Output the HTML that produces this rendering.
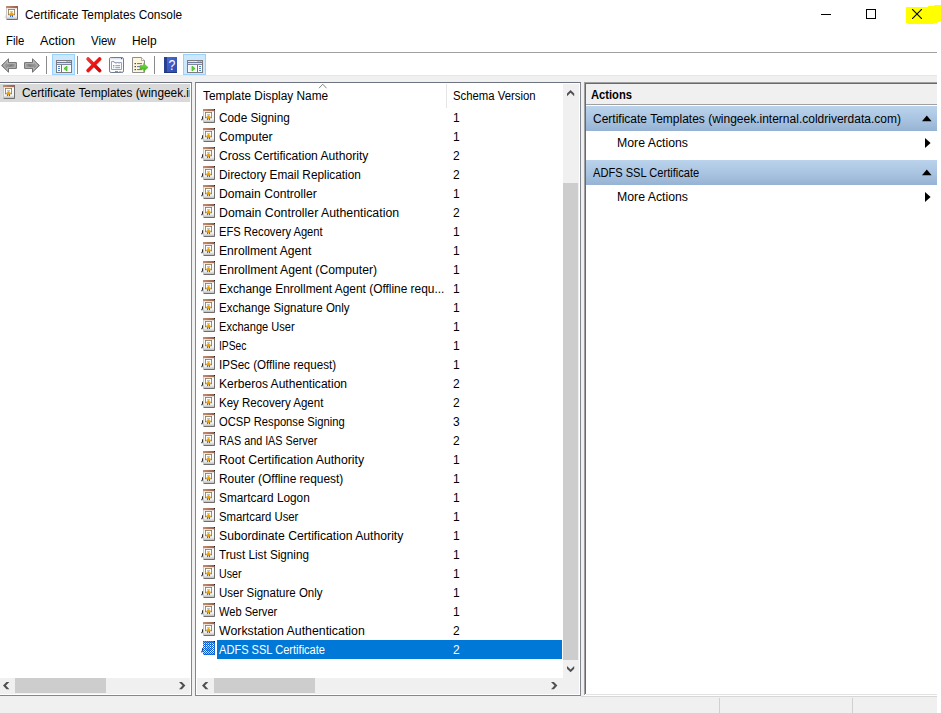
<!DOCTYPE html>
<html><head><meta charset="utf-8"><title>Certificate Templates Console</title>
<style>
html,body{margin:0;padding:0;background:#fff;}
body{width:941px;height:713px;position:relative;overflow:hidden;font-family:"Liberation Sans", sans-serif;font-size:12px;color:#000;}
.a{position:absolute;display:block}
.t{position:absolute;white-space:nowrap;line-height:14px;height:14px;transform-origin:0 0;font-size:12px}
.clip{position:absolute;overflow:hidden}
</style></head><body>
<svg width="0" height="0" style="position:absolute"><defs>
<linearGradient id="cg" x1="0" y1="0" x2="0" y2="1"><stop offset="0" stop-color="#fdfdfd"/><stop offset="0.74" stop-color="#f4f4f4"/><stop offset="0.88" stop-color="#d4d4d4"/><stop offset="1" stop-color="#b0b0b0"/></linearGradient>
<pattern id="dith" width="2" height="2" patternUnits="userSpaceOnUse"><rect x="0" y="0" width="1" height="1" fill="#0a5fd0"/><rect x="1" y="1" width="1" height="1" fill="#0a5fd0"/></pattern>
<linearGradient id="tb" x1="0" y1="0" x2="1" y2="0"><stop offset="0" stop-color="#c48d70"/><stop offset="1" stop-color="#94604c"/></linearGradient>
<linearGradient id="ag2" x1="0" y1="0" x2="1" y2="0.4"><stop offset="0" stop-color="#b4b4b4"/><stop offset="0.75" stop-color="#7c7c7c"/><stop offset="1" stop-color="#9a9a9a"/></linearGradient>
<linearGradient id="ag3" x1="1" y1="0" x2="0" y2="0.4"><stop offset="0" stop-color="#b4b4b4"/><stop offset="0.75" stop-color="#7c7c7c"/><stop offset="1" stop-color="#9a9a9a"/></linearGradient>
<linearGradient id="rx" gradientUnits="userSpaceOnUse" x1="2" y1="2" x2="16" y2="16"><stop offset="0" stop-color="#f43a3a"/><stop offset="0.5" stop-color="#ec1212"/><stop offset="1" stop-color="#c80000"/></linearGradient>
<linearGradient id="ag" x1="0" y1="0" x2="0" y2="1"><stop offset="0" stop-color="#c9c9c9"/><stop offset="0.5" stop-color="#8a8a8a"/><stop offset="1" stop-color="#b5b5b5"/></linearGradient>
<linearGradient id="hg" x1="0" y1="0" x2="1" y2="1"><stop offset="0" stop-color="#4a6fe0"/><stop offset="1" stop-color="#2d4aa8"/></linearGradient>
<linearGradient id="bh" x1="0" y1="0" x2="0" y2="1"><stop offset="0" stop-color="#bbd3ec"/><stop offset="0.5" stop-color="#aac5e2"/><stop offset="1" stop-color="#97b3d3"/></linearGradient>
<linearGradient id="gg" x1="0" y1="0" x2="0" y2="1"><stop offset="0" stop-color="#7ddc4a"/><stop offset="1" stop-color="#3fae1c"/></linearGradient>
</defs></svg>
<!-- title bar -->
<svg class="a" style="left:4px;top:6px" width="15" height="14" viewBox="0 0 15 14">
<path d="M2.2 7.3V12.2H0.3Z" fill="#e4e4e4"/>
<rect x="2.5" y="0.5" width="11.5" height="13" fill="url(#cg)" stroke="none"/>
<rect x="2" y="0" width="12" height="2.2" fill="url(#tb)"/>
<path d="M13.5 1.5V13.5H2.5" stroke="#6e6e6e" stroke-width="1" fill="none"/>
<path d="M2.5 2V13.5" stroke="#c8c8c8" stroke-width="1" fill="none"/>
<rect x="4.4" y="3.4" width="6.2" height="5.4" fill="#fff" stroke="#8f7246" stroke-width="0.8"/>
<rect x="6.1" y="9" width="1" height="2.1" fill="#2a62e0"/><rect x="8" y="9" width="1" height="2.1" fill="#2a62e0"/>
<rect x="6" y="5" width="3" height="0.7" fill="#8fb0f4"/>
<path d="M7.5 5.9L9.3 8L7.5 10.1L5.7 8Z" fill="#eaa400" stroke="#eaa400" stroke-width="0.7" stroke-linejoin="round"/>
</svg>
<span class="t" style="left:25px;top:8px;transform:scaleX(0.9872);">Certificate Templates Console</span>
<svg class="a" style="left:900px;top:0" width="41" height="30" viewBox="0 0 41 30"><path d="M6 7H28V6H34V5H41V21H40V22H37V23H34V24H8V23H6Z" fill="#ffff00"/></svg>
<div class="a" style="left:821px;top:14px;width:10px;height:1px;background:#000"></div>
<div class="a" style="left:866px;top:9px;width:8px;height:8px;border:1px solid #000"></div>
<svg class="a" style="left:912px;top:9px" width="10" height="10" viewBox="0 0 10 10"><path d="M0 0L10 10M10 0L0 10" stroke="#000" stroke-width="1.1"/></svg>
<!-- menu -->
<span class="t" style="left:6px;top:34px;transform:scaleX(0.9440);">File</span><span class="t" style="left:40px;top:34px;transform:scaleX(1.0483);">Action</span><span class="t" style="left:91px;top:34px;transform:scaleX(0.9553);">View</span><span class="t" style="left:132px;top:34px;transform:scaleX(0.9948);">Help</span>
<!-- toolbar -->
<div class="a" style="left:0;top:52px;width:937px;height:1px;background:#a0a0a0"></div>

<svg class="a" style="left:1px;top:58px" width="16" height="15" viewBox="0 0 16 15"><path d="M0.6 7.5L7.5 0.8V4.6H15.4V10.4H7.5V14.2Z" fill="url(#ag)" stroke="#707070" stroke-width="1" stroke-linejoin="round"/><path d="M2.3 7.5L6.4 3.5V5.7H14.3V9.3H6.4V11.5Z" fill="url(#ag2)" stroke="#c4c4c4" stroke-width="0.7" stroke-linejoin="round"/></svg>
<svg class="a" style="left:24px;top:58px" width="16" height="15" viewBox="0 0 16 15"><path d="M15.4 7.5L8.5 0.8V4.6H0.6V10.4H8.5V14.2Z" fill="url(#ag)" stroke="#707070" stroke-width="1" stroke-linejoin="round"/><path d="M13.7 7.5L9.6 3.5V5.7H1.7V9.3H9.6V11.5Z" fill="url(#ag3)" stroke="#c4c4c4" stroke-width="0.7" stroke-linejoin="round"/></svg>
<div class="a" style="left:46px;top:56px;width:1px;height:18px;background:#8a8a8a"></div>
<div class="a" style="left:52px;top:54px;width:21px;height:19px;background:#cce8ff;border:1px solid #99d1ff"></div>
<svg class="a" style="left:56px;top:60px" width="16" height="13" viewBox="0 0 16 13">
<rect x="0.5" y="0.5" width="15" height="12" fill="#7f88a0" stroke="#7c7c80"/>
<rect x="1" y="1" width="9.6" height="1" fill="#e6eaf3"/><rect x="11.6" y="1" width="1" height="1" fill="#f4f6fb"/><rect x="13.6" y="1" width="1" height="1" fill="#f4f6fb"/>
<rect x="1" y="2" width="14" height="1" fill="#707b97"/>
<rect x="1" y="3" width="14" height="1" fill="#dde1ec"/>
<rect x="1" y="4" width="14" height="1" fill="#7f88a0"/>
<rect x="1" y="5" width="4" height="7" fill="#fff"/><rect x="6" y="5" width="9" height="7" fill="#fff"/><rect x="7" y="5.6" width="6.6" height="5.6" fill="#f1f1f1"/>
<rect x="5" y="5" width="1" height="7" fill="#66708a"/>
<rect x="1.9" y="6.1" width="2.2" height="0.9" rx="0.4" fill="#3b78c8"/><rect x="1.9" y="8.1" width="2.2" height="0.9" rx="0.4" fill="#3b78c8"/><rect x="1.9" y="10.1" width="2.2" height="0.9" rx="0.4" fill="#3b78c8"/>
<path d="M10.9 6.2V10.9L8 8.55Z" fill="#62cc3e" stroke="#3cb521" stroke-width="0.8" stroke-linejoin="round"/></svg>
<div class="a" style="left:77px;top:56px;width:1px;height:18px;background:#8a8a8a"></div>
<svg class="a" style="left:85px;top:56px" width="18" height="18" viewBox="0 0 18 18"><path d="M3 2.8L14.5 14.4M14.5 2.8L3 14.4" stroke="#9c0000" stroke-width="3.6" stroke-linecap="round" opacity="0.5" transform="translate(0.35,0.4)"/><path d="M3 2.8L14.5 14.4M14.5 2.8L3 14.4" stroke="url(#rx)" stroke-width="3.3" stroke-linecap="round"/></svg>
<svg class="a" style="left:109px;top:57px" width="15" height="16" viewBox="0 0 15 16"><rect x="0.5" y="0.5" width="14" height="15" rx="1.6" fill="#fbfbfd" stroke="#747b8c"/><rect x="1" y="1" width="13" height="1.4" fill="#dfe3ee"/><rect x="12" y="1" width="1.2" height="1.2" fill="#3a5a9a"/>
<path d="M2.5 4.5H5V5.5H12.5V12.5H2.5Z" fill="#fff" stroke="#9aa1b6" stroke-width="1"/><rect x="6" y="5.8" width="2.2" height="1" fill="#c9cede"/><rect x="9" y="5.8" width="2.2" height="1" fill="#c9cede"/>
<rect x="4" y="8" width="1.4" height="1.4" fill="#1eb4ff"/><rect x="6.3" y="8.2" width="4.8" height="1" fill="#8c92a6"/>
<rect x="4.2" y="10.2" width="1" height="1" fill="#8c92a6"/><rect x="6.3" y="10.2" width="4.8" height="1" fill="#8c92a6"/>
<rect x="6" y="14" width="3" height="1.2" fill="#1eb4ff"/><rect x="10" y="14" width="2.6" height="1.2" fill="#b5b9c6"/></svg>
<svg class="a" style="left:132px;top:57px" width="17" height="16" viewBox="0 0 17 16"><path d="M0.5 0.5H9.5L12.5 3.5V15.5H0.5Z" fill="#fdf8dc" stroke="#8e8e8e"/><path d="M9.5 0.5V3.5H12.5" fill="#fff" stroke="#9a9a9a" stroke-width="0.8"/>
<rect x="2.6" y="6" width="1.2" height="1.2" fill="#222"/><rect x="2.6" y="9" width="1.2" height="1.2" fill="#222"/><rect x="2.6" y="12" width="1.2" height="1.2" fill="#222"/>
<rect x="5" y="6.1" width="5" height="1" fill="#6a62b8"/><rect x="5" y="9.1" width="3" height="1" fill="#6a62b8"/><rect x="5" y="12.1" width="5" height="1" fill="#6a62b8"/>
<path d="M8 8.6H11.6V6.4L16 10.4L11.6 14.4V12.2H8Z" fill="url(#gg)" stroke="#4cb82a" stroke-width="0.6"/></svg>
<div class="a" style="left:154px;top:56px;width:1px;height:18px;background:#8a8a8a"></div>
<svg class="a" style="left:164px;top:57px" width="13" height="16" viewBox="0 0 13 16"><rect x="0" y="0" width="13" height="16" fill="url(#hg)"/><rect x="0" y="0" width="3" height="16" fill="#27408f"/><rect x="0" y="15" width="13" height="1" fill="#22367c"/>
<text x="0" y="13.5" transform="translate(8 0) scale(0.82 1)" font-family="Liberation Sans, sans-serif" font-size="15" font-weight="400" fill="#fff" text-anchor="middle">?</text></svg>
<div class="a" style="left:183px;top:54px;width:21px;height:19px;background:#cce8ff;border:1px solid #99d1ff"></div>
<svg class="a" style="left:187px;top:60px" width="16" height="13" viewBox="0 0 16 13">
<rect x="0.5" y="0.5" width="15" height="12" fill="#7f88a0" stroke="#7c7c80"/>
<rect x="1" y="1" width="9.6" height="1" fill="#e6eaf3"/><rect x="11.6" y="1" width="1" height="1" fill="#f4f6fb"/><rect x="13.6" y="1" width="1" height="1" fill="#f4f6fb"/>
<rect x="1" y="2" width="14" height="1" fill="#707b97"/>
<rect x="1" y="3" width="14" height="1" fill="#dde1ec"/>
<rect x="1" y="4" width="14" height="1" fill="#7f88a0"/>
<g transform="translate(16,0) scale(-1,1)"><rect x="1" y="5" width="4" height="7" fill="#fff"/><rect x="6" y="5" width="9" height="7" fill="#fff"/><rect x="7" y="5.6" width="6.6" height="5.6" fill="#f1f1f1"/>
<rect x="5" y="5" width="1" height="7" fill="#66708a"/>
<rect x="1.9" y="6.1" width="2.2" height="0.9" rx="0.4" fill="#3b78c8"/><rect x="1.9" y="8.1" width="2.2" height="0.9" rx="0.4" fill="#3b78c8"/><rect x="1.9" y="10.1" width="2.2" height="0.9" rx="0.4" fill="#3b78c8"/>
<path d="M10.9 6.2V10.9L8 8.55Z" fill="#62cc3e" stroke="#3cb521" stroke-width="0.8" stroke-linejoin="round"/></g></svg>

<div class="a" style="left:0;top:75px;width:937px;height:7px;background:#f0f0f0"></div><div class="a" style="left:0;top:75px;width:937px;height:1px;background:#e7e7e7"></div>
<!-- main gray bg (gaps between panes + status) -->
<div class="a" style="left:0;top:82px;width:937px;height:631px;background:#f0f0f0"></div>
<!-- tree pane -->
<div class="a" style="left:0;top:82px;width:191px;height:613px;background:#fff;border-top:1px solid #6d7380;border-right:1px solid #828790;border-bottom:1px solid #828790;box-sizing:content-box;width:191px;height:612px"></div>
<div class="a" style="left:0;top:84px;width:190px;height:18px;background:#d9d9d9"></div>
<svg class="a" style="left:1px;top:85px" width="15" height="14" viewBox="0 0 15 14">
<path d="M2.2 7.3V12.2H0.3Z" fill="#e4e4e4"/>
<rect x="2.5" y="0.5" width="11.5" height="13" fill="url(#cg)" stroke="none"/>
<rect x="2" y="0" width="12" height="2.2" fill="url(#tb)"/>
<path d="M13.5 1.5V13.5H2.5" stroke="#6e6e6e" stroke-width="1" fill="none"/>
<path d="M2.5 2V13.5" stroke="#c8c8c8" stroke-width="1" fill="none"/>
<rect x="4.4" y="3.4" width="6.2" height="5.4" fill="#fff" stroke="#8f7246" stroke-width="0.8"/>
<rect x="6.1" y="9" width="1" height="2.1" fill="#2a62e0"/><rect x="8" y="9" width="1" height="2.1" fill="#2a62e0"/>
<rect x="6" y="5" width="3" height="0.7" fill="#8fb0f4"/>
<path d="M7.5 5.9L9.3 8L7.5 10.1L5.7 8Z" fill="#eaa400" stroke="#eaa400" stroke-width="0.7" stroke-linejoin="round"/>
</svg>
<div class="clip" style="left:0;top:84px;width:189.6px;height:18px"><div style="position:absolute;left:0;top:-84px"><span class="t" style="left:22px;top:86px;transform:scaleX(0.9871)">Certificate Templates (wingeek.internal.coldriverdata.com)</span></div></div>
<div class="a" style="left:0;top:678px;width:190px;height:16px;background:#f0f0f0"></div>
<div class="a" style="left:15px;top:678px;width:91px;height:15px;background:#cdcdcd"></div>
<svg class="a" style="left:2.9px;top:681.9px" width="7" height="8" viewBox="0 0 7 8"><path d="M6.4 0H3.5L0 3.6L3.5 7.2H6.4L2.9 3.6Z" fill="#505050"/></svg><svg class="a" style="left:178.8px;top:681.9px" width="7" height="8" viewBox="0 0 7 8"><path d="M0 0H2.9L6.4 3.6L2.9 7.2H0L3.5 3.6Z" fill="#505050"/></svg>
<!-- list pane -->
<div class="a" style="left:195px;top:82px;width:384px;height:612px;background:#fff;border:1px solid #828790;border-top-color:#6d7380"></div>
<div class="a" style="left:446px;top:84px;width:1px;height:24px;background:#e5e5e5"></div>
<svg class="a" style="left:318px;top:83px" width="10" height="6" viewBox="0 0 10 6"><path d="M1 5.2L4.75 1.2L8.5 5.2" fill="none" stroke="#777" stroke-width="0.9"/></svg>
<span class="t" style="left:203px;top:89px;transform:scaleX(0.9871);">Template Display Name</span><span class="t" style="left:453px;top:89px;transform:scaleX(0.9455);">Schema Version</span>
<svg class="a" style="left:201px;top:109px" width="15" height="14" viewBox="0 0 15 14">
<path d="M1.6 7.2v2.2L0.6 11.3" stroke="#222" stroke-width="1.1" fill="none"/>
<rect x="2.5" y="0.5" width="11.5" height="13" fill="url(#cg)" stroke="none"/>
<rect x="2" y="0" width="12" height="2.2" fill="url(#tb)"/><rect x="13" y="0" width="1" height="1" fill="#1a1a1a"/>
<path d="M13.5 1.5V13.5H2.5" stroke="#6e6e6e" stroke-width="1" fill="none"/>
<path d="M2.5 2V13.5" stroke="#c8c8c8" stroke-width="1" fill="none"/>
<rect x="4.4" y="3.4" width="6.2" height="5.4" fill="#fff" stroke="#8f7246" stroke-width="0.8"/>
<rect x="6.1" y="9" width="1" height="2.1" fill="#2a62e0"/><rect x="8" y="9" width="1" height="2.1" fill="#2a62e0"/>
<rect x="6" y="5" width="3" height="0.7" fill="#8fb0f4"/>
<path d="M7.5 5.9L9.3 8L7.5 10.1L5.7 8Z" fill="#eaa400" stroke="#eaa400" stroke-width="0.7" stroke-linejoin="round"/>
</svg><span class="t" style="left:219px;top:111px;transform:scaleX(0.9825);">Code Signing</span><span class="t" style="left:453px;top:111px;">1</span><svg class="a" style="left:201px;top:128px" width="15" height="14" viewBox="0 0 15 14">
<path d="M1.6 7.2v2.2L0.6 11.3" stroke="#222" stroke-width="1.1" fill="none"/>
<rect x="2.5" y="0.5" width="11.5" height="13" fill="url(#cg)" stroke="none"/>
<rect x="2" y="0" width="12" height="2.2" fill="url(#tb)"/><rect x="13" y="0" width="1" height="1" fill="#1a1a1a"/>
<path d="M13.5 1.5V13.5H2.5" stroke="#6e6e6e" stroke-width="1" fill="none"/>
<path d="M2.5 2V13.5" stroke="#c8c8c8" stroke-width="1" fill="none"/>
<rect x="4.4" y="3.4" width="6.2" height="5.4" fill="#fff" stroke="#8f7246" stroke-width="0.8"/>
<rect x="6.1" y="9" width="1" height="2.1" fill="#2a62e0"/><rect x="8" y="9" width="1" height="2.1" fill="#2a62e0"/>
<rect x="6" y="5" width="3" height="0.7" fill="#8fb0f4"/>
<path d="M7.5 5.9L9.3 8L7.5 10.1L5.7 8Z" fill="#eaa400" stroke="#eaa400" stroke-width="0.7" stroke-linejoin="round"/>
</svg><span class="t" style="left:219px;top:130px;transform:scaleX(1.0190);">Computer</span><span class="t" style="left:453px;top:130px;">1</span><svg class="a" style="left:201px;top:147px" width="15" height="14" viewBox="0 0 15 14">
<path d="M1.6 7.2v2.2L0.6 11.3" stroke="#222" stroke-width="1.1" fill="none"/>
<rect x="2.5" y="0.5" width="11.5" height="13" fill="url(#cg)" stroke="none"/>
<rect x="2" y="0" width="12" height="2.2" fill="url(#tb)"/><rect x="13" y="0" width="1" height="1" fill="#1a1a1a"/>
<path d="M13.5 1.5V13.5H2.5" stroke="#6e6e6e" stroke-width="1" fill="none"/>
<path d="M2.5 2V13.5" stroke="#c8c8c8" stroke-width="1" fill="none"/>
<rect x="4.4" y="3.4" width="6.2" height="5.4" fill="#fff" stroke="#8f7246" stroke-width="0.8"/>
<rect x="6.1" y="9" width="1" height="2.1" fill="#2a62e0"/><rect x="8" y="9" width="1" height="2.1" fill="#2a62e0"/>
<rect x="6" y="5" width="3" height="0.7" fill="#8fb0f4"/>
<path d="M7.5 5.9L9.3 8L7.5 10.1L5.7 8Z" fill="#eaa400" stroke="#eaa400" stroke-width="0.7" stroke-linejoin="round"/>
</svg><span class="t" style="left:219px;top:149px;transform:scaleX(1.0084);">Cross Certification Authority</span><span class="t" style="left:453px;top:149px;">2</span><svg class="a" style="left:201px;top:166px" width="15" height="14" viewBox="0 0 15 14">
<path d="M1.6 7.2v2.2L0.6 11.3" stroke="#222" stroke-width="1.1" fill="none"/>
<rect x="2.5" y="0.5" width="11.5" height="13" fill="url(#cg)" stroke="none"/>
<rect x="2" y="0" width="12" height="2.2" fill="url(#tb)"/><rect x="13" y="0" width="1" height="1" fill="#1a1a1a"/>
<path d="M13.5 1.5V13.5H2.5" stroke="#6e6e6e" stroke-width="1" fill="none"/>
<path d="M2.5 2V13.5" stroke="#c8c8c8" stroke-width="1" fill="none"/>
<rect x="4.4" y="3.4" width="6.2" height="5.4" fill="#fff" stroke="#8f7246" stroke-width="0.8"/>
<rect x="6.1" y="9" width="1" height="2.1" fill="#2a62e0"/><rect x="8" y="9" width="1" height="2.1" fill="#2a62e0"/>
<rect x="6" y="5" width="3" height="0.7" fill="#8fb0f4"/>
<path d="M7.5 5.9L9.3 8L7.5 10.1L5.7 8Z" fill="#eaa400" stroke="#eaa400" stroke-width="0.7" stroke-linejoin="round"/>
</svg><span class="t" style="left:219px;top:168px;transform:scaleX(0.9843);">Directory Email Replication</span><span class="t" style="left:453px;top:168px;">2</span><svg class="a" style="left:201px;top:185px" width="15" height="14" viewBox="0 0 15 14">
<path d="M1.6 7.2v2.2L0.6 11.3" stroke="#222" stroke-width="1.1" fill="none"/>
<rect x="2.5" y="0.5" width="11.5" height="13" fill="url(#cg)" stroke="none"/>
<rect x="2" y="0" width="12" height="2.2" fill="url(#tb)"/><rect x="13" y="0" width="1" height="1" fill="#1a1a1a"/>
<path d="M13.5 1.5V13.5H2.5" stroke="#6e6e6e" stroke-width="1" fill="none"/>
<path d="M2.5 2V13.5" stroke="#c8c8c8" stroke-width="1" fill="none"/>
<rect x="4.4" y="3.4" width="6.2" height="5.4" fill="#fff" stroke="#8f7246" stroke-width="0.8"/>
<rect x="6.1" y="9" width="1" height="2.1" fill="#2a62e0"/><rect x="8" y="9" width="1" height="2.1" fill="#2a62e0"/>
<rect x="6" y="5" width="3" height="0.7" fill="#8fb0f4"/>
<path d="M7.5 5.9L9.3 8L7.5 10.1L5.7 8Z" fill="#eaa400" stroke="#eaa400" stroke-width="0.7" stroke-linejoin="round"/>
</svg><span class="t" style="left:219px;top:187px;transform:scaleX(1.0104);">Domain Controller</span><span class="t" style="left:453px;top:187px;">1</span><svg class="a" style="left:201px;top:204px" width="15" height="14" viewBox="0 0 15 14">
<path d="M1.6 7.2v2.2L0.6 11.3" stroke="#222" stroke-width="1.1" fill="none"/>
<rect x="2.5" y="0.5" width="11.5" height="13" fill="url(#cg)" stroke="none"/>
<rect x="2" y="0" width="12" height="2.2" fill="url(#tb)"/><rect x="13" y="0" width="1" height="1" fill="#1a1a1a"/>
<path d="M13.5 1.5V13.5H2.5" stroke="#6e6e6e" stroke-width="1" fill="none"/>
<path d="M2.5 2V13.5" stroke="#c8c8c8" stroke-width="1" fill="none"/>
<rect x="4.4" y="3.4" width="6.2" height="5.4" fill="#fff" stroke="#8f7246" stroke-width="0.8"/>
<rect x="6.1" y="9" width="1" height="2.1" fill="#2a62e0"/><rect x="8" y="9" width="1" height="2.1" fill="#2a62e0"/>
<rect x="6" y="5" width="3" height="0.7" fill="#8fb0f4"/>
<path d="M7.5 5.9L9.3 8L7.5 10.1L5.7 8Z" fill="#eaa400" stroke="#eaa400" stroke-width="0.7" stroke-linejoin="round"/>
</svg><span class="t" style="left:219px;top:206px;transform:scaleX(1.0265);">Domain Controller Authentication</span><span class="t" style="left:453px;top:206px;">2</span><svg class="a" style="left:201px;top:223px" width="15" height="14" viewBox="0 0 15 14">
<path d="M1.6 7.2v2.2L0.6 11.3" stroke="#222" stroke-width="1.1" fill="none"/>
<rect x="2.5" y="0.5" width="11.5" height="13" fill="url(#cg)" stroke="none"/>
<rect x="2" y="0" width="12" height="2.2" fill="url(#tb)"/><rect x="13" y="0" width="1" height="1" fill="#1a1a1a"/>
<path d="M13.5 1.5V13.5H2.5" stroke="#6e6e6e" stroke-width="1" fill="none"/>
<path d="M2.5 2V13.5" stroke="#c8c8c8" stroke-width="1" fill="none"/>
<rect x="4.4" y="3.4" width="6.2" height="5.4" fill="#fff" stroke="#8f7246" stroke-width="0.8"/>
<rect x="6.1" y="9" width="1" height="2.1" fill="#2a62e0"/><rect x="8" y="9" width="1" height="2.1" fill="#2a62e0"/>
<rect x="6" y="5" width="3" height="0.7" fill="#8fb0f4"/>
<path d="M7.5 5.9L9.3 8L7.5 10.1L5.7 8Z" fill="#eaa400" stroke="#eaa400" stroke-width="0.7" stroke-linejoin="round"/>
</svg><span class="t" style="left:219px;top:225px;transform:scaleX(0.9303);">EFS Recovery Agent</span><span class="t" style="left:453px;top:225px;">1</span><svg class="a" style="left:201px;top:242px" width="15" height="14" viewBox="0 0 15 14">
<path d="M1.6 7.2v2.2L0.6 11.3" stroke="#222" stroke-width="1.1" fill="none"/>
<rect x="2.5" y="0.5" width="11.5" height="13" fill="url(#cg)" stroke="none"/>
<rect x="2" y="0" width="12" height="2.2" fill="url(#tb)"/><rect x="13" y="0" width="1" height="1" fill="#1a1a1a"/>
<path d="M13.5 1.5V13.5H2.5" stroke="#6e6e6e" stroke-width="1" fill="none"/>
<path d="M2.5 2V13.5" stroke="#c8c8c8" stroke-width="1" fill="none"/>
<rect x="4.4" y="3.4" width="6.2" height="5.4" fill="#fff" stroke="#8f7246" stroke-width="0.8"/>
<rect x="6.1" y="9" width="1" height="2.1" fill="#2a62e0"/><rect x="8" y="9" width="1" height="2.1" fill="#2a62e0"/>
<rect x="6" y="5" width="3" height="0.7" fill="#8fb0f4"/>
<path d="M7.5 5.9L9.3 8L7.5 10.1L5.7 8Z" fill="#eaa400" stroke="#eaa400" stroke-width="0.7" stroke-linejoin="round"/>
</svg><span class="t" style="left:219px;top:244px;transform:scaleX(1.0110);">Enrollment Agent</span><span class="t" style="left:453px;top:244px;">1</span><svg class="a" style="left:201px;top:261px" width="15" height="14" viewBox="0 0 15 14">
<path d="M1.6 7.2v2.2L0.6 11.3" stroke="#222" stroke-width="1.1" fill="none"/>
<rect x="2.5" y="0.5" width="11.5" height="13" fill="url(#cg)" stroke="none"/>
<rect x="2" y="0" width="12" height="2.2" fill="url(#tb)"/><rect x="13" y="0" width="1" height="1" fill="#1a1a1a"/>
<path d="M13.5 1.5V13.5H2.5" stroke="#6e6e6e" stroke-width="1" fill="none"/>
<path d="M2.5 2V13.5" stroke="#c8c8c8" stroke-width="1" fill="none"/>
<rect x="4.4" y="3.4" width="6.2" height="5.4" fill="#fff" stroke="#8f7246" stroke-width="0.8"/>
<rect x="6.1" y="9" width="1" height="2.1" fill="#2a62e0"/><rect x="8" y="9" width="1" height="2.1" fill="#2a62e0"/>
<rect x="6" y="5" width="3" height="0.7" fill="#8fb0f4"/>
<path d="M7.5 5.9L9.3 8L7.5 10.1L5.7 8Z" fill="#eaa400" stroke="#eaa400" stroke-width="0.7" stroke-linejoin="round"/>
</svg><span class="t" style="left:219px;top:263px;transform:scaleX(1.0170);">Enrollment Agent (Computer)</span><span class="t" style="left:453px;top:263px;">1</span><svg class="a" style="left:201px;top:280px" width="15" height="14" viewBox="0 0 15 14">
<path d="M1.6 7.2v2.2L0.6 11.3" stroke="#222" stroke-width="1.1" fill="none"/>
<rect x="2.5" y="0.5" width="11.5" height="13" fill="url(#cg)" stroke="none"/>
<rect x="2" y="0" width="12" height="2.2" fill="url(#tb)"/><rect x="13" y="0" width="1" height="1" fill="#1a1a1a"/>
<path d="M13.5 1.5V13.5H2.5" stroke="#6e6e6e" stroke-width="1" fill="none"/>
<path d="M2.5 2V13.5" stroke="#c8c8c8" stroke-width="1" fill="none"/>
<rect x="4.4" y="3.4" width="6.2" height="5.4" fill="#fff" stroke="#8f7246" stroke-width="0.8"/>
<rect x="6.1" y="9" width="1" height="2.1" fill="#2a62e0"/><rect x="8" y="9" width="1" height="2.1" fill="#2a62e0"/>
<rect x="6" y="5" width="3" height="0.7" fill="#8fb0f4"/>
<path d="M7.5 5.9L9.3 8L7.5 10.1L5.7 8Z" fill="#eaa400" stroke="#eaa400" stroke-width="0.7" stroke-linejoin="round"/>
</svg><span class="t" style="left:219px;top:282px;transform:scaleX(0.9917);">Exchange Enrollment Agent (Offline requ...</span><span class="t" style="left:453px;top:282px;">1</span><svg class="a" style="left:201px;top:299px" width="15" height="14" viewBox="0 0 15 14">
<path d="M1.6 7.2v2.2L0.6 11.3" stroke="#222" stroke-width="1.1" fill="none"/>
<rect x="2.5" y="0.5" width="11.5" height="13" fill="url(#cg)" stroke="none"/>
<rect x="2" y="0" width="12" height="2.2" fill="url(#tb)"/><rect x="13" y="0" width="1" height="1" fill="#1a1a1a"/>
<path d="M13.5 1.5V13.5H2.5" stroke="#6e6e6e" stroke-width="1" fill="none"/>
<path d="M2.5 2V13.5" stroke="#c8c8c8" stroke-width="1" fill="none"/>
<rect x="4.4" y="3.4" width="6.2" height="5.4" fill="#fff" stroke="#8f7246" stroke-width="0.8"/>
<rect x="6.1" y="9" width="1" height="2.1" fill="#2a62e0"/><rect x="8" y="9" width="1" height="2.1" fill="#2a62e0"/>
<rect x="6" y="5" width="3" height="0.7" fill="#8fb0f4"/>
<path d="M7.5 5.9L9.3 8L7.5 10.1L5.7 8Z" fill="#eaa400" stroke="#eaa400" stroke-width="0.7" stroke-linejoin="round"/>
</svg><span class="t" style="left:219px;top:301px;transform:scaleX(0.9596);">Exchange Signature Only</span><span class="t" style="left:453px;top:301px;">1</span><svg class="a" style="left:201px;top:318px" width="15" height="14" viewBox="0 0 15 14">
<path d="M1.6 7.2v2.2L0.6 11.3" stroke="#222" stroke-width="1.1" fill="none"/>
<rect x="2.5" y="0.5" width="11.5" height="13" fill="url(#cg)" stroke="none"/>
<rect x="2" y="0" width="12" height="2.2" fill="url(#tb)"/><rect x="13" y="0" width="1" height="1" fill="#1a1a1a"/>
<path d="M13.5 1.5V13.5H2.5" stroke="#6e6e6e" stroke-width="1" fill="none"/>
<path d="M2.5 2V13.5" stroke="#c8c8c8" stroke-width="1" fill="none"/>
<rect x="4.4" y="3.4" width="6.2" height="5.4" fill="#fff" stroke="#8f7246" stroke-width="0.8"/>
<rect x="6.1" y="9" width="1" height="2.1" fill="#2a62e0"/><rect x="8" y="9" width="1" height="2.1" fill="#2a62e0"/>
<rect x="6" y="5" width="3" height="0.7" fill="#8fb0f4"/>
<path d="M7.5 5.9L9.3 8L7.5 10.1L5.7 8Z" fill="#eaa400" stroke="#eaa400" stroke-width="0.7" stroke-linejoin="round"/>
</svg><span class="t" style="left:219px;top:320px;transform:scaleX(0.9221);">Exchange User</span><span class="t" style="left:453px;top:320px;">1</span><svg class="a" style="left:201px;top:337px" width="15" height="14" viewBox="0 0 15 14">
<path d="M1.6 7.2v2.2L0.6 11.3" stroke="#222" stroke-width="1.1" fill="none"/>
<rect x="2.5" y="0.5" width="11.5" height="13" fill="url(#cg)" stroke="none"/>
<rect x="2" y="0" width="12" height="2.2" fill="url(#tb)"/><rect x="13" y="0" width="1" height="1" fill="#1a1a1a"/>
<path d="M13.5 1.5V13.5H2.5" stroke="#6e6e6e" stroke-width="1" fill="none"/>
<path d="M2.5 2V13.5" stroke="#c8c8c8" stroke-width="1" fill="none"/>
<rect x="4.4" y="3.4" width="6.2" height="5.4" fill="#fff" stroke="#8f7246" stroke-width="0.8"/>
<rect x="6.1" y="9" width="1" height="2.1" fill="#2a62e0"/><rect x="8" y="9" width="1" height="2.1" fill="#2a62e0"/>
<rect x="6" y="5" width="3" height="0.7" fill="#8fb0f4"/>
<path d="M7.5 5.9L9.3 8L7.5 10.1L5.7 8Z" fill="#eaa400" stroke="#eaa400" stroke-width="0.7" stroke-linejoin="round"/>
</svg><span class="t" style="left:219px;top:339px;transform:scaleX(0.8583);">IPSec</span><span class="t" style="left:453px;top:339px;">1</span><svg class="a" style="left:201px;top:356px" width="15" height="14" viewBox="0 0 15 14">
<path d="M1.6 7.2v2.2L0.6 11.3" stroke="#222" stroke-width="1.1" fill="none"/>
<rect x="2.5" y="0.5" width="11.5" height="13" fill="url(#cg)" stroke="none"/>
<rect x="2" y="0" width="12" height="2.2" fill="url(#tb)"/><rect x="13" y="0" width="1" height="1" fill="#1a1a1a"/>
<path d="M13.5 1.5V13.5H2.5" stroke="#6e6e6e" stroke-width="1" fill="none"/>
<path d="M2.5 2V13.5" stroke="#c8c8c8" stroke-width="1" fill="none"/>
<rect x="4.4" y="3.4" width="6.2" height="5.4" fill="#fff" stroke="#8f7246" stroke-width="0.8"/>
<rect x="6.1" y="9" width="1" height="2.1" fill="#2a62e0"/><rect x="8" y="9" width="1" height="2.1" fill="#2a62e0"/>
<rect x="6" y="5" width="3" height="0.7" fill="#8fb0f4"/>
<path d="M7.5 5.9L9.3 8L7.5 10.1L5.7 8Z" fill="#eaa400" stroke="#eaa400" stroke-width="0.7" stroke-linejoin="round"/>
</svg><span class="t" style="left:219px;top:358px;transform:scaleX(0.9657);">IPSec (Offline request)</span><span class="t" style="left:453px;top:358px;">1</span><svg class="a" style="left:201px;top:375px" width="15" height="14" viewBox="0 0 15 14">
<path d="M1.6 7.2v2.2L0.6 11.3" stroke="#222" stroke-width="1.1" fill="none"/>
<rect x="2.5" y="0.5" width="11.5" height="13" fill="url(#cg)" stroke="none"/>
<rect x="2" y="0" width="12" height="2.2" fill="url(#tb)"/><rect x="13" y="0" width="1" height="1" fill="#1a1a1a"/>
<path d="M13.5 1.5V13.5H2.5" stroke="#6e6e6e" stroke-width="1" fill="none"/>
<path d="M2.5 2V13.5" stroke="#c8c8c8" stroke-width="1" fill="none"/>
<rect x="4.4" y="3.4" width="6.2" height="5.4" fill="#fff" stroke="#8f7246" stroke-width="0.8"/>
<rect x="6.1" y="9" width="1" height="2.1" fill="#2a62e0"/><rect x="8" y="9" width="1" height="2.1" fill="#2a62e0"/>
<rect x="6" y="5" width="3" height="0.7" fill="#8fb0f4"/>
<path d="M7.5 5.9L9.3 8L7.5 10.1L5.7 8Z" fill="#eaa400" stroke="#eaa400" stroke-width="0.7" stroke-linejoin="round"/>
</svg><span class="t" style="left:219px;top:377px;transform:scaleX(1.0049);">Kerberos Authentication</span><span class="t" style="left:453px;top:377px;">2</span><svg class="a" style="left:201px;top:394px" width="15" height="14" viewBox="0 0 15 14">
<path d="M1.6 7.2v2.2L0.6 11.3" stroke="#222" stroke-width="1.1" fill="none"/>
<rect x="2.5" y="0.5" width="11.5" height="13" fill="url(#cg)" stroke="none"/>
<rect x="2" y="0" width="12" height="2.2" fill="url(#tb)"/><rect x="13" y="0" width="1" height="1" fill="#1a1a1a"/>
<path d="M13.5 1.5V13.5H2.5" stroke="#6e6e6e" stroke-width="1" fill="none"/>
<path d="M2.5 2V13.5" stroke="#c8c8c8" stroke-width="1" fill="none"/>
<rect x="4.4" y="3.4" width="6.2" height="5.4" fill="#fff" stroke="#8f7246" stroke-width="0.8"/>
<rect x="6.1" y="9" width="1" height="2.1" fill="#2a62e0"/><rect x="8" y="9" width="1" height="2.1" fill="#2a62e0"/>
<rect x="6" y="5" width="3" height="0.7" fill="#8fb0f4"/>
<path d="M7.5 5.9L9.3 8L7.5 10.1L5.7 8Z" fill="#eaa400" stroke="#eaa400" stroke-width="0.7" stroke-linejoin="round"/>
</svg><span class="t" style="left:219px;top:396px;transform:scaleX(0.9597);">Key Recovery Agent</span><span class="t" style="left:453px;top:396px;">2</span><svg class="a" style="left:201px;top:413px" width="15" height="14" viewBox="0 0 15 14">
<path d="M1.6 7.2v2.2L0.6 11.3" stroke="#222" stroke-width="1.1" fill="none"/>
<rect x="2.5" y="0.5" width="11.5" height="13" fill="url(#cg)" stroke="none"/>
<rect x="2" y="0" width="12" height="2.2" fill="url(#tb)"/><rect x="13" y="0" width="1" height="1" fill="#1a1a1a"/>
<path d="M13.5 1.5V13.5H2.5" stroke="#6e6e6e" stroke-width="1" fill="none"/>
<path d="M2.5 2V13.5" stroke="#c8c8c8" stroke-width="1" fill="none"/>
<rect x="4.4" y="3.4" width="6.2" height="5.4" fill="#fff" stroke="#8f7246" stroke-width="0.8"/>
<rect x="6.1" y="9" width="1" height="2.1" fill="#2a62e0"/><rect x="8" y="9" width="1" height="2.1" fill="#2a62e0"/>
<rect x="6" y="5" width="3" height="0.7" fill="#8fb0f4"/>
<path d="M7.5 5.9L9.3 8L7.5 10.1L5.7 8Z" fill="#eaa400" stroke="#eaa400" stroke-width="0.7" stroke-linejoin="round"/>
</svg><span class="t" style="left:219px;top:415px;transform:scaleX(0.9346);">OCSP Response Signing</span><span class="t" style="left:453px;top:415px;">3</span><svg class="a" style="left:201px;top:432px" width="15" height="14" viewBox="0 0 15 14">
<path d="M1.6 7.2v2.2L0.6 11.3" stroke="#222" stroke-width="1.1" fill="none"/>
<rect x="2.5" y="0.5" width="11.5" height="13" fill="url(#cg)" stroke="none"/>
<rect x="2" y="0" width="12" height="2.2" fill="url(#tb)"/><rect x="13" y="0" width="1" height="1" fill="#1a1a1a"/>
<path d="M13.5 1.5V13.5H2.5" stroke="#6e6e6e" stroke-width="1" fill="none"/>
<path d="M2.5 2V13.5" stroke="#c8c8c8" stroke-width="1" fill="none"/>
<rect x="4.4" y="3.4" width="6.2" height="5.4" fill="#fff" stroke="#8f7246" stroke-width="0.8"/>
<rect x="6.1" y="9" width="1" height="2.1" fill="#2a62e0"/><rect x="8" y="9" width="1" height="2.1" fill="#2a62e0"/>
<rect x="6" y="5" width="3" height="0.7" fill="#8fb0f4"/>
<path d="M7.5 5.9L9.3 8L7.5 10.1L5.7 8Z" fill="#eaa400" stroke="#eaa400" stroke-width="0.7" stroke-linejoin="round"/>
</svg><span class="t" style="left:219px;top:434px;transform:scaleX(0.8981);">RAS and IAS Server</span><span class="t" style="left:453px;top:434px;">2</span><svg class="a" style="left:201px;top:451px" width="15" height="14" viewBox="0 0 15 14">
<path d="M1.6 7.2v2.2L0.6 11.3" stroke="#222" stroke-width="1.1" fill="none"/>
<rect x="2.5" y="0.5" width="11.5" height="13" fill="url(#cg)" stroke="none"/>
<rect x="2" y="0" width="12" height="2.2" fill="url(#tb)"/><rect x="13" y="0" width="1" height="1" fill="#1a1a1a"/>
<path d="M13.5 1.5V13.5H2.5" stroke="#6e6e6e" stroke-width="1" fill="none"/>
<path d="M2.5 2V13.5" stroke="#c8c8c8" stroke-width="1" fill="none"/>
<rect x="4.4" y="3.4" width="6.2" height="5.4" fill="#fff" stroke="#8f7246" stroke-width="0.8"/>
<rect x="6.1" y="9" width="1" height="2.1" fill="#2a62e0"/><rect x="8" y="9" width="1" height="2.1" fill="#2a62e0"/>
<rect x="6" y="5" width="3" height="0.7" fill="#8fb0f4"/>
<path d="M7.5 5.9L9.3 8L7.5 10.1L5.7 8Z" fill="#eaa400" stroke="#eaa400" stroke-width="0.7" stroke-linejoin="round"/>
</svg><span class="t" style="left:219px;top:453px;transform:scaleX(1.0211);">Root Certification Authority</span><span class="t" style="left:453px;top:453px;">1</span><svg class="a" style="left:201px;top:470px" width="15" height="14" viewBox="0 0 15 14">
<path d="M1.6 7.2v2.2L0.6 11.3" stroke="#222" stroke-width="1.1" fill="none"/>
<rect x="2.5" y="0.5" width="11.5" height="13" fill="url(#cg)" stroke="none"/>
<rect x="2" y="0" width="12" height="2.2" fill="url(#tb)"/><rect x="13" y="0" width="1" height="1" fill="#1a1a1a"/>
<path d="M13.5 1.5V13.5H2.5" stroke="#6e6e6e" stroke-width="1" fill="none"/>
<path d="M2.5 2V13.5" stroke="#c8c8c8" stroke-width="1" fill="none"/>
<rect x="4.4" y="3.4" width="6.2" height="5.4" fill="#fff" stroke="#8f7246" stroke-width="0.8"/>
<rect x="6.1" y="9" width="1" height="2.1" fill="#2a62e0"/><rect x="8" y="9" width="1" height="2.1" fill="#2a62e0"/>
<rect x="6" y="5" width="3" height="0.7" fill="#8fb0f4"/>
<path d="M7.5 5.9L9.3 8L7.5 10.1L5.7 8Z" fill="#eaa400" stroke="#eaa400" stroke-width="0.7" stroke-linejoin="round"/>
</svg><span class="t" style="left:219px;top:472px;transform:scaleX(0.9930);">Router (Offline request)</span><span class="t" style="left:453px;top:472px;">1</span><svg class="a" style="left:201px;top:489px" width="15" height="14" viewBox="0 0 15 14">
<path d="M1.6 7.2v2.2L0.6 11.3" stroke="#222" stroke-width="1.1" fill="none"/>
<rect x="2.5" y="0.5" width="11.5" height="13" fill="url(#cg)" stroke="none"/>
<rect x="2" y="0" width="12" height="2.2" fill="url(#tb)"/><rect x="13" y="0" width="1" height="1" fill="#1a1a1a"/>
<path d="M13.5 1.5V13.5H2.5" stroke="#6e6e6e" stroke-width="1" fill="none"/>
<path d="M2.5 2V13.5" stroke="#c8c8c8" stroke-width="1" fill="none"/>
<rect x="4.4" y="3.4" width="6.2" height="5.4" fill="#fff" stroke="#8f7246" stroke-width="0.8"/>
<rect x="6.1" y="9" width="1" height="2.1" fill="#2a62e0"/><rect x="8" y="9" width="1" height="2.1" fill="#2a62e0"/>
<rect x="6" y="5" width="3" height="0.7" fill="#8fb0f4"/>
<path d="M7.5 5.9L9.3 8L7.5 10.1L5.7 8Z" fill="#eaa400" stroke="#eaa400" stroke-width="0.7" stroke-linejoin="round"/>
</svg><span class="t" style="left:219px;top:491px;transform:scaleX(0.9863);">Smartcard Logon</span><span class="t" style="left:453px;top:491px;">1</span><svg class="a" style="left:201px;top:508px" width="15" height="14" viewBox="0 0 15 14">
<path d="M1.6 7.2v2.2L0.6 11.3" stroke="#222" stroke-width="1.1" fill="none"/>
<rect x="2.5" y="0.5" width="11.5" height="13" fill="url(#cg)" stroke="none"/>
<rect x="2" y="0" width="12" height="2.2" fill="url(#tb)"/><rect x="13" y="0" width="1" height="1" fill="#1a1a1a"/>
<path d="M13.5 1.5V13.5H2.5" stroke="#6e6e6e" stroke-width="1" fill="none"/>
<path d="M2.5 2V13.5" stroke="#c8c8c8" stroke-width="1" fill="none"/>
<rect x="4.4" y="3.4" width="6.2" height="5.4" fill="#fff" stroke="#8f7246" stroke-width="0.8"/>
<rect x="6.1" y="9" width="1" height="2.1" fill="#2a62e0"/><rect x="8" y="9" width="1" height="2.1" fill="#2a62e0"/>
<rect x="6" y="5" width="3" height="0.7" fill="#8fb0f4"/>
<path d="M7.5 5.9L9.3 8L7.5 10.1L5.7 8Z" fill="#eaa400" stroke="#eaa400" stroke-width="0.7" stroke-linejoin="round"/>
</svg><span class="t" style="left:219px;top:510px;transform:scaleX(0.9449);">Smartcard User</span><span class="t" style="left:453px;top:510px;">1</span><svg class="a" style="left:201px;top:527px" width="15" height="14" viewBox="0 0 15 14">
<path d="M1.6 7.2v2.2L0.6 11.3" stroke="#222" stroke-width="1.1" fill="none"/>
<rect x="2.5" y="0.5" width="11.5" height="13" fill="url(#cg)" stroke="none"/>
<rect x="2" y="0" width="12" height="2.2" fill="url(#tb)"/><rect x="13" y="0" width="1" height="1" fill="#1a1a1a"/>
<path d="M13.5 1.5V13.5H2.5" stroke="#6e6e6e" stroke-width="1" fill="none"/>
<path d="M2.5 2V13.5" stroke="#c8c8c8" stroke-width="1" fill="none"/>
<rect x="4.4" y="3.4" width="6.2" height="5.4" fill="#fff" stroke="#8f7246" stroke-width="0.8"/>
<rect x="6.1" y="9" width="1" height="2.1" fill="#2a62e0"/><rect x="8" y="9" width="1" height="2.1" fill="#2a62e0"/>
<rect x="6" y="5" width="3" height="0.7" fill="#8fb0f4"/>
<path d="M7.5 5.9L9.3 8L7.5 10.1L5.7 8Z" fill="#eaa400" stroke="#eaa400" stroke-width="0.7" stroke-linejoin="round"/>
</svg><span class="t" style="left:219px;top:529px;transform:scaleX(1.0159);">Subordinate Certification Authority</span><span class="t" style="left:453px;top:529px;">1</span><svg class="a" style="left:201px;top:546px" width="15" height="14" viewBox="0 0 15 14">
<path d="M1.6 7.2v2.2L0.6 11.3" stroke="#222" stroke-width="1.1" fill="none"/>
<rect x="2.5" y="0.5" width="11.5" height="13" fill="url(#cg)" stroke="none"/>
<rect x="2" y="0" width="12" height="2.2" fill="url(#tb)"/><rect x="13" y="0" width="1" height="1" fill="#1a1a1a"/>
<path d="M13.5 1.5V13.5H2.5" stroke="#6e6e6e" stroke-width="1" fill="none"/>
<path d="M2.5 2V13.5" stroke="#c8c8c8" stroke-width="1" fill="none"/>
<rect x="4.4" y="3.4" width="6.2" height="5.4" fill="#fff" stroke="#8f7246" stroke-width="0.8"/>
<rect x="6.1" y="9" width="1" height="2.1" fill="#2a62e0"/><rect x="8" y="9" width="1" height="2.1" fill="#2a62e0"/>
<rect x="6" y="5" width="3" height="0.7" fill="#8fb0f4"/>
<path d="M7.5 5.9L9.3 8L7.5 10.1L5.7 8Z" fill="#eaa400" stroke="#eaa400" stroke-width="0.7" stroke-linejoin="round"/>
</svg><span class="t" style="left:219px;top:548px;transform:scaleX(0.9754);">Trust List Signing</span><span class="t" style="left:453px;top:548px;">1</span><svg class="a" style="left:201px;top:565px" width="15" height="14" viewBox="0 0 15 14">
<path d="M1.6 7.2v2.2L0.6 11.3" stroke="#222" stroke-width="1.1" fill="none"/>
<rect x="2.5" y="0.5" width="11.5" height="13" fill="url(#cg)" stroke="none"/>
<rect x="2" y="0" width="12" height="2.2" fill="url(#tb)"/><rect x="13" y="0" width="1" height="1" fill="#1a1a1a"/>
<path d="M13.5 1.5V13.5H2.5" stroke="#6e6e6e" stroke-width="1" fill="none"/>
<path d="M2.5 2V13.5" stroke="#c8c8c8" stroke-width="1" fill="none"/>
<rect x="4.4" y="3.4" width="6.2" height="5.4" fill="#fff" stroke="#8f7246" stroke-width="0.8"/>
<rect x="6.1" y="9" width="1" height="2.1" fill="#2a62e0"/><rect x="8" y="9" width="1" height="2.1" fill="#2a62e0"/>
<rect x="6" y="5" width="3" height="0.7" fill="#8fb0f4"/>
<path d="M7.5 5.9L9.3 8L7.5 10.1L5.7 8Z" fill="#eaa400" stroke="#eaa400" stroke-width="0.7" stroke-linejoin="round"/>
</svg><span class="t" style="left:219px;top:567px;transform:scaleX(0.8856);">User</span><span class="t" style="left:453px;top:567px;">1</span><svg class="a" style="left:201px;top:584px" width="15" height="14" viewBox="0 0 15 14">
<path d="M1.6 7.2v2.2L0.6 11.3" stroke="#222" stroke-width="1.1" fill="none"/>
<rect x="2.5" y="0.5" width="11.5" height="13" fill="url(#cg)" stroke="none"/>
<rect x="2" y="0" width="12" height="2.2" fill="url(#tb)"/><rect x="13" y="0" width="1" height="1" fill="#1a1a1a"/>
<path d="M13.5 1.5V13.5H2.5" stroke="#6e6e6e" stroke-width="1" fill="none"/>
<path d="M2.5 2V13.5" stroke="#c8c8c8" stroke-width="1" fill="none"/>
<rect x="4.4" y="3.4" width="6.2" height="5.4" fill="#fff" stroke="#8f7246" stroke-width="0.8"/>
<rect x="6.1" y="9" width="1" height="2.1" fill="#2a62e0"/><rect x="8" y="9" width="1" height="2.1" fill="#2a62e0"/>
<rect x="6" y="5" width="3" height="0.7" fill="#8fb0f4"/>
<path d="M7.5 5.9L9.3 8L7.5 10.1L5.7 8Z" fill="#eaa400" stroke="#eaa400" stroke-width="0.7" stroke-linejoin="round"/>
</svg><span class="t" style="left:219px;top:586px;transform:scaleX(0.9583);">User Signature Only</span><span class="t" style="left:453px;top:586px;">1</span><svg class="a" style="left:201px;top:603px" width="15" height="14" viewBox="0 0 15 14">
<path d="M1.6 7.2v2.2L0.6 11.3" stroke="#222" stroke-width="1.1" fill="none"/>
<rect x="2.5" y="0.5" width="11.5" height="13" fill="url(#cg)" stroke="none"/>
<rect x="2" y="0" width="12" height="2.2" fill="url(#tb)"/><rect x="13" y="0" width="1" height="1" fill="#1a1a1a"/>
<path d="M13.5 1.5V13.5H2.5" stroke="#6e6e6e" stroke-width="1" fill="none"/>
<path d="M2.5 2V13.5" stroke="#c8c8c8" stroke-width="1" fill="none"/>
<rect x="4.4" y="3.4" width="6.2" height="5.4" fill="#fff" stroke="#8f7246" stroke-width="0.8"/>
<rect x="6.1" y="9" width="1" height="2.1" fill="#2a62e0"/><rect x="8" y="9" width="1" height="2.1" fill="#2a62e0"/>
<rect x="6" y="5" width="3" height="0.7" fill="#8fb0f4"/>
<path d="M7.5 5.9L9.3 8L7.5 10.1L5.7 8Z" fill="#eaa400" stroke="#eaa400" stroke-width="0.7" stroke-linejoin="round"/>
</svg><span class="t" style="left:219px;top:605px;transform:scaleX(0.9225);">Web Server</span><span class="t" style="left:453px;top:605px;">1</span><svg class="a" style="left:201px;top:622px" width="15" height="14" viewBox="0 0 15 14">
<path d="M1.6 7.2v2.2L0.6 11.3" stroke="#222" stroke-width="1.1" fill="none"/>
<rect x="2.5" y="0.5" width="11.5" height="13" fill="url(#cg)" stroke="none"/>
<rect x="2" y="0" width="12" height="2.2" fill="url(#tb)"/><rect x="13" y="0" width="1" height="1" fill="#1a1a1a"/>
<path d="M13.5 1.5V13.5H2.5" stroke="#6e6e6e" stroke-width="1" fill="none"/>
<path d="M2.5 2V13.5" stroke="#c8c8c8" stroke-width="1" fill="none"/>
<rect x="4.4" y="3.4" width="6.2" height="5.4" fill="#fff" stroke="#8f7246" stroke-width="0.8"/>
<rect x="6.1" y="9" width="1" height="2.1" fill="#2a62e0"/><rect x="8" y="9" width="1" height="2.1" fill="#2a62e0"/>
<rect x="6" y="5" width="3" height="0.7" fill="#8fb0f4"/>
<path d="M7.5 5.9L9.3 8L7.5 10.1L5.7 8Z" fill="#eaa400" stroke="#eaa400" stroke-width="0.7" stroke-linejoin="round"/>
</svg><span class="t" style="left:219px;top:624px;transform:scaleX(1.0275);">Workstation Authentication</span><span class="t" style="left:453px;top:624px;">2</span><div class="a" style="left:217px;top:640px;width:345px;height:19px;background:#0078d7"></div><svg class="a" style="left:201px;top:641px" width="15" height="14" viewBox="0 0 15 14">
<path d="M1.6 7.2v2.2L0.6 11.3" stroke="#222" stroke-width="1.1" fill="none"/>
<rect x="2.5" y="0.5" width="11.5" height="13" fill="url(#cg)" stroke="none"/>
<rect x="2" y="0" width="12" height="2.2" fill="url(#tb)"/><rect x="13" y="0" width="1" height="1" fill="#1a1a1a"/>
<path d="M13.5 1.5V13.5H2.5" stroke="#6e6e6e" stroke-width="1" fill="none"/>
<path d="M2.5 2V13.5" stroke="#c8c8c8" stroke-width="1" fill="none"/>
<rect x="4.4" y="3.4" width="6.2" height="5.4" fill="#fff" stroke="#8f7246" stroke-width="0.8"/>
<rect x="6.1" y="9" width="1" height="2.1" fill="#2a62e0"/><rect x="8" y="9" width="1" height="2.1" fill="#2a62e0"/>
<rect x="6" y="5" width="3" height="0.7" fill="#8fb0f4"/>
<path d="M7.5 5.9L9.3 8L7.5 10.1L5.7 8Z" fill="#eaa400" stroke="#eaa400" stroke-width="0.7" stroke-linejoin="round"/>
<rect x="2" y="0" width="12" height="14" fill="url(#dith)"/><path d="M1.6 7.2v2.2L0.6 11.3" stroke="#1c63c8" stroke-width="1.1" fill="none" stroke-dasharray="1 1"/></svg><span class="t" style="left:219px;top:643px;transform:scaleX(0.9224);color:#fff;">ADFS SSL Certificate</span><span class="t" style="left:453px;top:643px;color:#fff;">2</span>
<div class="a" style="left:563px;top:84px;width:16px;height:610px;background:#f0f0f0"></div>
<div class="a" style="left:563px;top:183px;width:15px;height:477px;background:#cdcdcd"></div>
<svg class="a" style="left:566.8px;top:90px" width="8" height="7" viewBox="0 0 8 7"><path d="M0 6.2V3.5L3.6 0L7.2 3.5V6.2L3.6 2.8Z" fill="#505050"/></svg><svg class="a" style="left:566.9px;top:666px" width="8" height="7" viewBox="0 0 8 7"><path d="M0 0V2.7L3.6 6.2L7.2 2.7V0L3.6 3.4Z" fill="#505050"/></svg>
<div class="a" style="left:197px;top:678px;width:366px;height:16px;background:#f0f0f0"></div>
<div class="a" style="left:214px;top:678px;width:101px;height:15px;background:#cdcdcd"></div>
<svg class="a" style="left:202px;top:681.9px" width="7" height="8" viewBox="0 0 7 8"><path d="M6.4 0H3.5L0 3.6L3.5 7.2H6.4L2.9 3.6Z" fill="#505050"/></svg><svg class="a" style="left:551px;top:681.9px" width="7" height="8" viewBox="0 0 7 8"><path d="M0 0H2.9L6.4 3.6L2.9 7.2H0L3.5 3.6Z" fill="#505050"/></svg>
<!-- actions pane -->
<div class="a" style="left:584px;top:82px;width:353px;height:613px;background:#fff"></div>
<div class="a" style="left:584px;top:82px;width:353px;height:1px;background:#a0a0a0"></div>
<div class="a" style="left:585px;top:83px;width:352px;height:1px;background:#696969"></div>
<div class="a" style="left:584px;top:82px;width:1px;height:613px;background:#a0a0a0"></div>
<div class="a" style="left:585px;top:83px;width:1px;height:611px;background:#696969"></div>
<div class="a" style="left:586px;top:694px;width:351px;height:1px;background:#e3e3e3"></div>
<div class="a" style="left:584px;top:695px;width:353px;height:1px;background:#fff"></div>
<div class="a" style="left:586px;top:84px;width:351px;height:20px;background:#f0f0f0"></div>
<div class="a" style="left:586px;top:104px;width:351px;height:1px;background:#a0a0a0"></div>
<span class="t" style="left:591px;top:88px;transform:scaleX(0.9310);font-weight:700;">Actions</span>
<svg class="a" style="left:586px;top:106px" width="351" height="25"><rect width="351" height="25" fill="url(#bh)"/></svg>
<span class="t" style="left:593px;top:112px;">Certificate Templates (wingeek.internal.coldriverdata.com)</span>
<svg class="a" style="left:922px;top:115px" width="10" height="7" viewBox="0 0 10 7"><path d="M0 6.2L4.8 0.6L9.6 6.2Z" fill="#000"/></svg>
<span class="t" style="left:617px;top:136px;transform:scaleX(1.0236);">More Actions</span>
<svg class="a" style="left:925px;top:138px" width="6" height="10" viewBox="0 0 6 10"><path d="M0 0L5.6 5L0 10Z" fill="#000"/></svg>
<svg class="a" style="left:586px;top:160px" width="351" height="25"><rect width="351" height="25" fill="url(#bh)"/></svg>
<span class="t" style="left:593px;top:166px;transform:scaleX(0.9246);">ADFS SSL Certificate</span>
<svg class="a" style="left:922px;top:169px" width="10" height="7" viewBox="0 0 10 7"><path d="M0 6.2L4.8 0.6L9.6 6.2Z" fill="#000"/></svg>
<span class="t" style="left:617px;top:190px;transform:scaleX(1.0236);">More Actions</span>
<svg class="a" style="left:925px;top:192px" width="6" height="10" viewBox="0 0 6 10"><path d="M0 0L5.6 5L0 10Z" fill="#000"/></svg>
<!-- status bar -->
<div class="a" style="left:581px;top:696px;width:356px;height:1px;background:#d7d7d7"></div>
<div class="a" style="left:719px;top:698px;width:1px;height:15px;background:#d0d0d0"></div>
<div class="a" style="left:852px;top:698px;width:1px;height:15px;background:#d0d0d0"></div>
</body></html>
